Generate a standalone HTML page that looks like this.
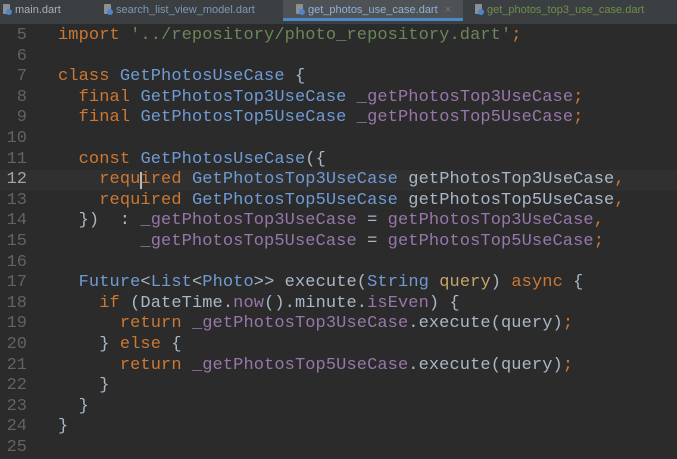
<!DOCTYPE html>
<html><head><meta charset="utf-8"><style>
body{margin:0;width:677px;height:459px;background:#2b2b2b;overflow:hidden;position:relative;font-family:"Liberation Mono",monospace;}
.tabs{position:absolute;left:0;top:0;width:677px;height:24px;background:#3c3f41;font-family:"Liberation Sans",sans-serif;font-size:11px;color:#a9b0b8;}
.tab{position:absolute;top:0;height:24px;line-height:20px;white-space:nowrap}
.tab i{display:inline-block;width:7px;height:10px;background:#8a9099;border-radius:1px;margin-right:5px;vertical-align:-1px;position:relative}
.tab i:after{content:"";position:absolute;left:3px;top:5px;width:6px;height:6px;border-radius:50%;background:#4a86c8}
.act{background:#4e5254;border-bottom:3px solid #4a88c7;height:21px}
.ln{position:absolute;left:0;width:27px;text-align:right;color:#606366;font-size:17px}
.c{position:absolute;left:58px;font-size:17px;color:#a9b7c6;white-space:pre;letter-spacing:0.1px}
.k{color:#cc7832}.t{color:#6f9bd5}.f{color:#9876aa}.s{color:#6a8759}.y{color:#c6a566}
.hl{position:absolute;left:0;width:677px;height:21px;background:#303030}
</style></head><body>
<div class="tabs">
<div class="tab" style="left:3px"><i></i>main.dart</div>
<div class="tab" style="left:104px;color:#7e97b5"><i></i>search_list_view_model.dart</div>
<div class="tab act" style="left:283px;width:180px;padding-left:13px;box-sizing:border-box;color:#8fb0d8"><i></i>get_photos_use_case.dart <span style="color:#777;margin-left:4px">×</span></div>
<div class="tab" style="left:475px;color:#6e8e4e"><i></i>get_photos_top3_use_case.dart</div>
</div>
<div class="hl" style="top:170px"></div>
<div style="position:absolute;left:140px;top:172px;width:2px;height:17px;background:#bbb"></div>
<div class="ln" style="top:26px">5</div><div class="c" style="top:26px"><span class="k">import</span> <span class="s">'../repository/photo_repository.dart'</span><span class="k">;</span></div>
<div class="ln" style="top:47px">6</div>
<div class="ln" style="top:67px">7</div><div class="c" style="top:67px"><span class="k">class</span> <span class="t">GetPhotosUseCase</span> {</div>
<div class="ln" style="top:88px">8</div><div class="c" style="top:88px">  <span class="k">final</span> <span class="t">GetPhotosTop3UseCase</span> <span class="f">_getPhotosTop3UseCase</span><span class="k">;</span></div>
<div class="ln" style="top:108px">9</div><div class="c" style="top:108px">  <span class="k">final</span> <span class="t">GetPhotosTop5UseCase</span> <span class="f">_getPhotosTop5UseCase</span><span class="k">;</span></div>
<div class="ln" style="top:129px">10</div>
<div class="ln" style="top:150px">11</div><div class="c" style="top:150px">  <span class="k">const</span> <span class="t">GetPhotosUseCase</span>({</div>
<div class="ln" style="top:170px;color:#a4a3a3">12</div><div class="c" style="top:170px">    <span class="k">required</span> <span class="t">GetPhotosTop3UseCase</span> getPhotosTop3UseCase<span class="k">,</span></div>
<div class="ln" style="top:191px">13</div><div class="c" style="top:191px">    <span class="k">required</span> <span class="t">GetPhotosTop5UseCase</span> getPhotosTop5UseCase<span class="k">,</span></div>
<div class="ln" style="top:211px">14</div><div class="c" style="top:211px">  })  : <span class="f">_getPhotosTop3UseCase</span> = <span class="f">getPhotosTop3UseCase</span><span class="k">,</span></div>
<div class="ln" style="top:232px">15</div><div class="c" style="top:232px">        <span class="f">_getPhotosTop5UseCase</span> = <span class="f">getPhotosTop5UseCase</span><span class="k">;</span></div>
<div class="ln" style="top:253px">16</div>
<div class="ln" style="top:273px">17</div><div class="c" style="top:273px">  <span class="t">Future</span>&lt;<span class="t">List</span>&lt;<span class="t">Photo</span>&gt;&gt; execute(<span class="t">String</span> <span class="y">query</span>) <span class="k">async</span> {</div>
<div class="ln" style="top:294px">18</div><div class="c" style="top:294px">    <span class="k">if</span> (DateTime.<span class="f">now</span>().minute.<span class="f">isEven</span>) {</div>
<div class="ln" style="top:314px">19</div><div class="c" style="top:314px">      <span class="k">return</span> <span class="f">_getPhotosTop3UseCase</span>.execute(query)<span class="k">;</span></div>
<div class="ln" style="top:335px">20</div><div class="c" style="top:335px">    } <span class="k">else</span> {</div>
<div class="ln" style="top:356px">21</div><div class="c" style="top:356px">      <span class="k">return</span> <span class="f">_getPhotosTop5UseCase</span>.execute(query)<span class="k">;</span></div>
<div class="ln" style="top:376px">22</div><div class="c" style="top:376px">    }</div>
<div class="ln" style="top:397px">23</div><div class="c" style="top:397px">  }</div>
<div class="ln" style="top:417px">24</div><div class="c" style="top:417px">}</div>
<div class="ln" style="top:438px">25</div>
</body></html>
